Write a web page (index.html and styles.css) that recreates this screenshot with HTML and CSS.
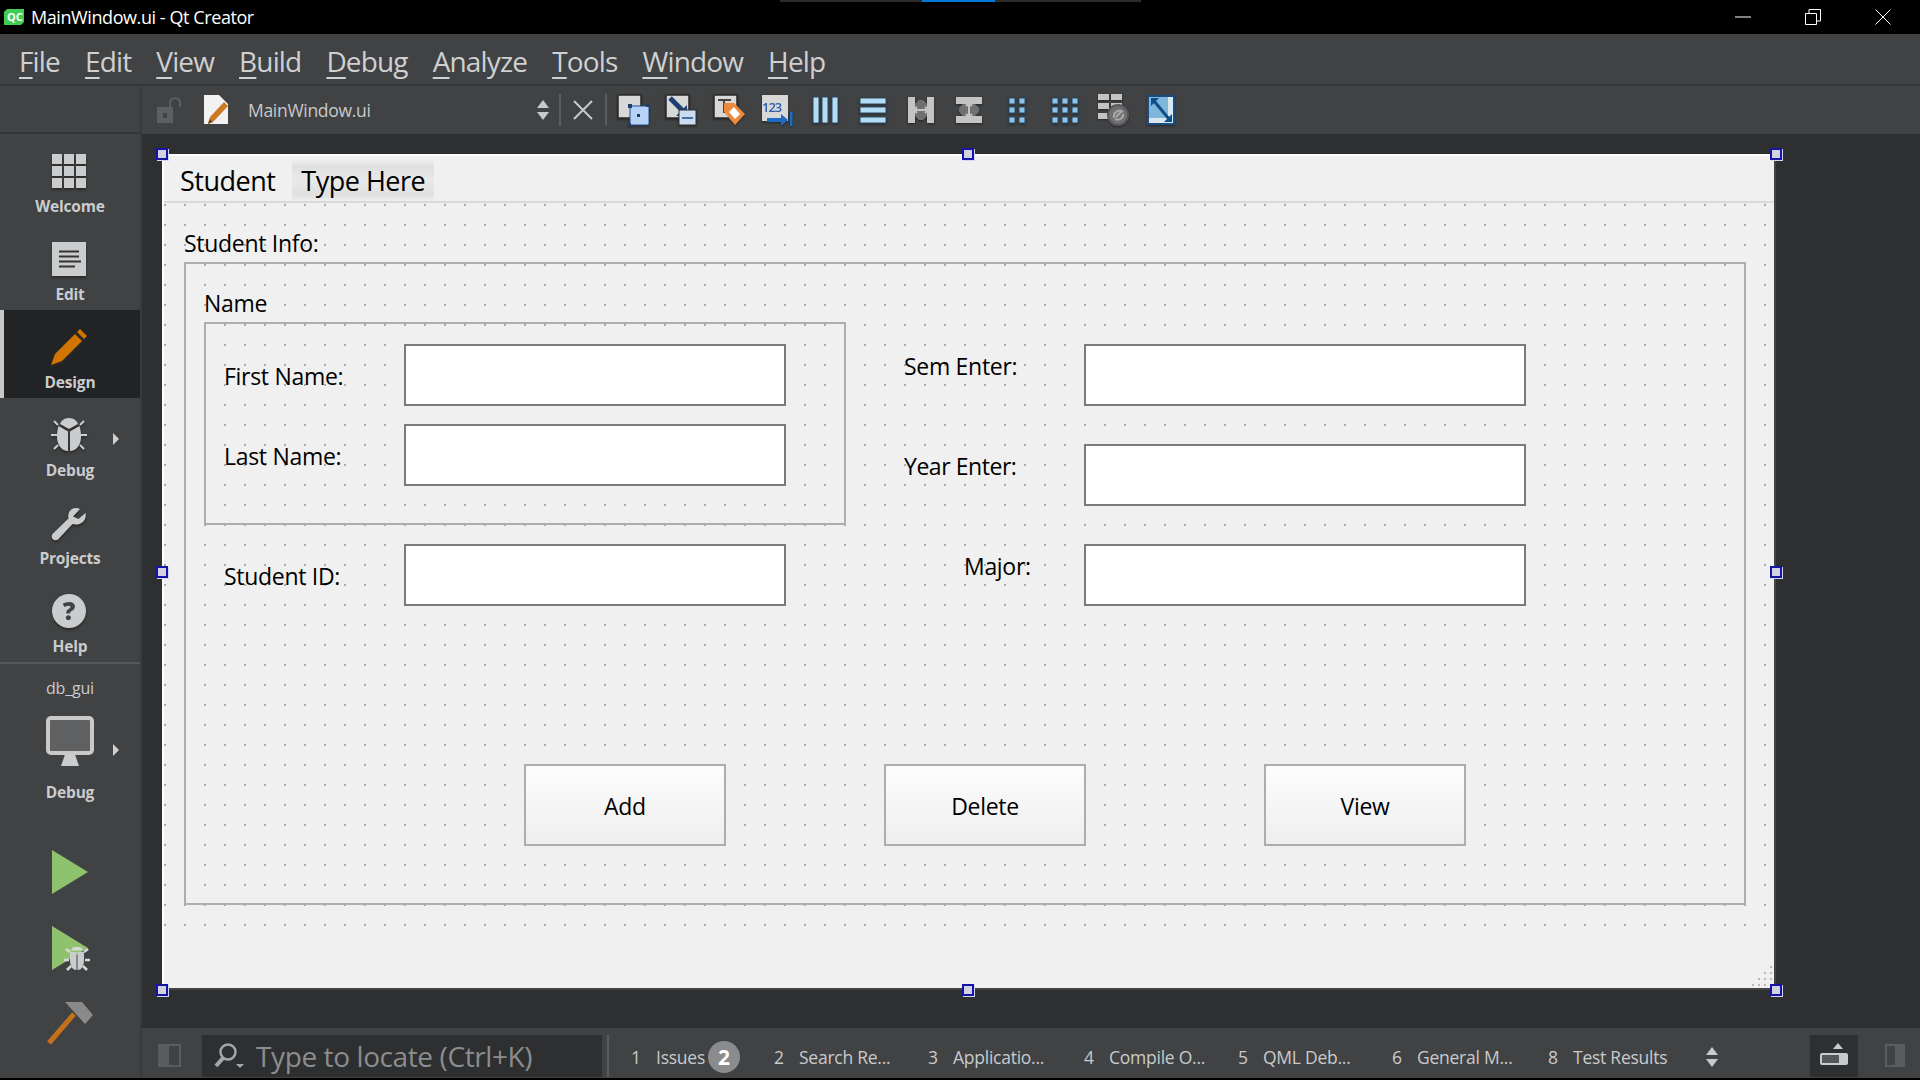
FILE: index.html
```html
<!DOCTYPE html>
<html lang="en">
<head>
    <meta charset="UTF-8">
    <title>MainWindow.ui - Qt Creator</title>
    <link rel="stylesheet" href="styles.css">
</head>
<body>

<header class="titlebar">
    <svg class="app-logo" width="20" height="16" viewBox="0 0 20 16"><path class="logo-bg" d="M3 0H20V13L17 16H0V3Z"/><text x="3" y="12" class="logo-text">QC</text></svg>
    <span class="title-text">MainWindow.ui - Qt Creator</span>
    <div class="task-strip"><span class="task-active"></span></div>
    <div class="window-btns">
        <svg width="16" height="16" viewBox="0 0 16 16"><path d="M0 8H16" /></svg>
        <svg width="16" height="16" viewBox="0 0 16 16"><path d="M.5 4.5H11.5V15.5H.5ZM4 4V.5H15.5V12H12" /></svg>
        <svg width="16" height="16" viewBox="0 0 16 16"><path d="M.5.5L15.5 15.5M15.5.5L.5 15.5" /></svg>
    </div>
</header>

<nav class="menubar">
    <span><u>F</u>ile</span>
    <span><u>E</u>dit</span>
    <span><u>V</u>iew</span>
    <span><u>B</u>uild</span>
    <span><u>D</u>ebug</span>
    <span><u>A</u>nalyze</span>
    <span><u>T</u>ools</span>
    <span><u>W</u>indow</span>
    <span><u>H</u>elp</span>
</nav>

<div class="workspace">
    <aside class="sidebar">
        <div class="side-top"></div>

        <div class="mode">
            <div class="mode-icon">
                <svg width="36" height="36" viewBox="0 0 36 36" class="nudge"><g class="ic"><rect x="1" y="1" width="10" height="10"/><rect x="13" y="1" width="10" height="10"/><rect x="25" y="1" width="10" height="10"/><rect x="1" y="13" width="10" height="10"/><rect x="13" y="13" width="10" height="10"/><rect x="25" y="13" width="10" height="10"/><rect x="1" y="25" width="10" height="10"/><rect x="13" y="25" width="10" height="10"/><rect x="25" y="25" width="10" height="10"/></g></svg>
            </div>
            <span class="mode-label">Welcome</span>
        </div>

        <div class="mode">
            <div class="mode-icon">
                <svg width="34" height="34" viewBox="0 0 34 34" class="nudge"><rect class="ic" width="34" height="34"/><path class="ic-lines" d="M7 9.5H27M7 14.5H27M7 19.5H29M7 24.5H23"/></svg>
            </div>
            <span class="mode-label">Edit</span>
        </div>

        <div class="mode mode-active">
            <div class="mode-icon">
                <svg width="36" height="36" viewBox="0 0 36 36" class="nudge"><path class="pencil" d="M0 36L4 25L24 5L31 12L11 32Z"/><path class="pencil" d="M26 3L29 0L36 7L33 10Z"/></svg>
            </div>
            <span class="mode-label">Design</span>
        </div>

        <div class="mode">
            <div class="mode-icon">
                <svg width="36" height="36" viewBox="0 0 36 36" class="nudge"><g class="ic"><path d="M18 1C13 1 10 4 9 7L18 12L27 7C26 4 23 1 18 1Z"/><path d="M7.500 9L17 14.500V34C11 34 6 28 6 20C6 16 6.500 12 7.500 9Z"/><path d="M28.500 9L19 14.500V34C25 34 30 28 30 20C30 16 29.500 12 28.500 9Z"/></g><path class="ic-leg" d="M7 8L3 4M29 8L33 4M6 18H0M30 18H36M7 28L3 32M29 28L33 32"/></svg>
            </div>
            <span class="mode-label">Debug</span>
            <span class="mode-arrow"></span>
        </div>

        <div class="mode">
            <div class="mode-icon">
                <svg width="36" height="36" viewBox="0 0 36 36" class="nudge"><path class="ic" d="M34.500 8L27.500 14L22 11.500L29 4C23 1 16 5 17.500 13.500L1.500 29C-1 33 3 37 7 34.500L21.500 19C29 21 36 16 34.500 8Z"/></svg>
            </div>
            <span class="mode-label">Projects</span>
        </div>

        <div class="mode">
            <div class="mode-icon">
                <svg width="36" height="36" viewBox="0 0 36 36" class="nudge"><circle class="ic" cx="18" cy="18" r="17"/><text class="help-q" x="18" y="27">?</text></svg>
            </div>
            <span class="mode-label">Help</span>
        </div>

        <div class="kit">
            <span class="kit-name">db_gui</span>
            <div class="kit-icon">
                <svg width="48" height="50" viewBox="0 0 48 50"><rect class="monitor" x="2" y="2" width="44" height="35" rx="3"/><path class="ic" d="M15 50L19.500 37H28.500L33 50Z"/></svg>
            </div>
            <span class="mode-label">Debug</span>
            <span class="mode-arrow kit-arrow"></span>
        </div>

        <div class="run-btn">
            <svg width="44" height="46" viewBox="0 0 44 46"><path class="run" d="M4 1L40 23L4 45Z"/></svg>
        </div>
        <div class="run-btn">
            <svg width="44" height="46" viewBox="0 0 44 46"><path class="run" d="M4 1L40 23L4 45Z"/><g class="ic"><path d="M27 22C24.500 22 23.500 24 23 25.500H35C34.500 24 33.500 22 31 22Z" class="bug-head"/><path d="M22 27H28.500V45C24 45 22 40 22 35Z"/><path d="M36 27H29.500V45C34 45 36 40 36 35Z"/></g><path class="ic-leg thin" d="M22 27L18 24M36 27L40 24M21 35H16M37 35H42M23 41L19 45M35 41L39 45"/></svg>
        </div>
        <div class="run-btn">
            <svg width="48" height="44" viewBox="0 0 48 44"><path class="hammer-handle" d="M3 41L28 12"/><path class="hammer-head" d="M19 0H36L47 13L39 22Z"/></svg>
        </div>
    </aside>

    <main class="main">
        <div class="toolbar">
            <svg class="lock" width="26" height="26" viewBox="0 0 26 26"><rect class="lock-body" x="0" y="10" width="16" height="16"/><rect class="lock-hole" x="6" y="16" width="4" height="5"/><path class="lock-shackle" d="M13 10V6C13 2 15 1 18 1C21 1 23 2 23 6V10"/></svg>
            <svg class="file-icon" width="28" height="30" viewBox="0 0 28 30"><path class="file-page" d="M1 0H16L25 9V29H1Z"/><path class="file-pencil" d="M5 29L7 22L21 7L25 11L11 26Z"/><path class="file-tip" d="M5 29L6.500 24L10 27Z"/></svg>
            <span class="doc-name">MainWindow.ui</span>
            <svg class="updown" width="12" height="20" viewBox="0 0 12 20"><path d="M6 0L12 8H0ZM0 12H12L6 20Z"/></svg>
            <span class="tool-sep"></span>
            <svg class="close-doc" width="20" height="20" viewBox="0 0 20 20"><path d="M1 1L19 19M19 1L1 19"/></svg>
            <span class="tool-sep"></span>

            <div class="tool-icons">
                <span class="tool"><svg width="32" height="32" viewBox="0 0 32 32"><rect class="tile" x="1" y="1" width="23" height="23"/><rect class="blue" x="13" y="12" width="19" height="19" rx="1"/><rect class="dark" x="20" y="20" width="3" height="3"/><rect class="navy" x="11" y="10" width="4" height="4"/><rect class="navy" x="11" y="29" width="3" height="3"/><rect class="navy" x="29" y="10" width="3" height="3"/></svg></span>
                <span class="tool"><svg width="32" height="32" viewBox="0 0 32 32"><rect class="tile" x="1" y="1" width="23" height="23"/><path class="arrow-navy" d="M5 4L19 18"/><path class="navy" d="M22 22V11L11 22Z"/><rect class="blue-lite" x="14" y="16" width="17" height="15"/><rect class="steel" x="17" y="23" width="11" height="2"/></svg></span>
                <span class="tool"><svg width="32" height="32" viewBox="0 0 32 32"><rect class="tile" x="1" y="1" width="23" height="23"/><path class="t-mark" d="M5 6H18M11 6V19"/><path class="orange" d="M11 9H21L32 20L22 31L11 18Z"/><path class="white" d="M16 18L21 13L27 20L22 25Z"/></svg></span>
                <span class="tool"><svg width="32" height="32" viewBox="0 0 32 32"><rect class="tile tile-plain" x="1" y="1" width="26" height="26"/><text class="tab-nums" x="1" y="18">123</text><path class="arrow-blue" d="M6 26H24"/><path class="navy-bright" d="M20 20L27 26L20 32Z"/><rect class="navy-bright" x="29" y="18" width="2.500" height="14"/></svg></span>
                <span class="tool"><svg width="32" height="32" viewBox="0 0 32 32"><rect class="bar" x="4" y="3" width="6" height="26"/><rect class="bar" x="13" y="3" width="6" height="26"/><rect class="bar" x="23" y="3" width="6" height="26"/></svg></span>
                <span class="tool"><svg width="32" height="32" viewBox="0 0 32 32"><rect class="bar" x="3" y="4" width="26" height="6"/><rect class="bar" x="3" y="13" width="26" height="6"/><rect class="bar" x="3" y="23" width="26" height="6"/></svg></span>
                <span class="tool"><svg width="32" height="32" viewBox="0 0 32 32"><rect class="gray" x="3" y="3" width="7" height="26"/><rect class="gray" x="22" y="3" width="7" height="26"/><path class="gray-dim" d="M10 10L14 6H18L22 10V22L18 26H14L10 22Z"/><path class="split" d="M9 16H23M12 13L9 16L12 19M20 13L23 16L20 19"/></svg></span>
                <span class="tool"><svg width="32" height="32" viewBox="0 0 32 32"><rect class="gray" x="3" y="3" width="26" height="7"/><rect class="gray" x="3" y="22" width="26" height="7"/><path class="gray-dim" d="M10 10L6 14V18L10 22H22L26 18V14L22 10Z"/><path class="split" d="M16 9V23M13 12L16 9L19 12M13 20L16 23L19 20"/></svg></span>
                <span class="tool"><svg width="32" height="32" viewBox="0 0 32 32"><g class="cells"><rect x="8" y="4" width="6" height="6"/><rect x="18" y="4" width="6" height="6"/><rect x="8" y="13" width="6" height="6"/><rect x="18" y="13" width="6" height="6"/><rect x="8" y="23" width="6" height="6"/><rect x="18" y="23" width="6" height="6"/></g></svg></span>
                <span class="tool"><svg width="32" height="32" viewBox="0 0 32 32"><g class="cells"><rect x="3" y="4" width="6" height="6"/><rect x="13" y="4" width="6" height="6"/><rect x="23" y="4" width="6" height="6"/><rect x="3" y="13" width="6" height="6"/><rect x="13" y="13" width="6" height="6"/><rect x="23" y="13" width="6" height="6"/><rect x="3" y="23" width="6" height="6"/><rect x="13" y="23" width="6" height="6"/><rect x="23" y="23" width="6" height="6"/></g></svg></span>
                <span class="tool"><svg width="34" height="34" viewBox="0 0 34 34"><g class="gray"><rect x="2" y="1" width="11" height="6"/><rect x="15" y="1" width="11" height="6"/><rect x="2" y="10" width="11" height="6"/><rect x="15" y="10" width="11" height="6"/><rect x="2" y="20" width="11" height="6"/></g><circle class="break-ring" cx="22" cy="22" r="10"/><path class="break-mark" d="M18 25C17 19 23 16 27 19M19 26C23 28 28 25 27 21M20 24L25 19"/></svg></span>
                <span class="tool"><svg width="30" height="32" viewBox="0 0 30 32"><rect class="adjust-frame" x="1" y="1" width="28" height="30"/><rect class="adjust-lite" x="22" y="3" width="5" height="21"/><rect class="adjust-lite" x="3" y="24" width="24" height="5"/><rect class="adjust-mid" x="3" y="3" width="19" height="21"/><path class="adjust-arrow" d="M8 7L23 25"/><path class="adjust-tip" d="M5 4H13L5 12ZM26 28H18L26 20Z"/></svg></span>
            </div>
        </div>

        <div class="canvas">
            <div class="form">
                <div class="form-menu">
                    <span class="form-menu-item">Student</span>
                    <span class="form-menu-item form-menu-new">Type Here</span>
                </div>
                <div class="central">
                    <span class="lbl lbl-info">Student Info:</span>
                    <div class="frame frame-info"></div>
                    <span class="lbl lbl-name">Name</span>
                    <div class="frame frame-name"></div>

                    <span class="lbl lbl-first">First Name:</span>
                    <input class="edit edit-first" type="text">
                    <span class="lbl lbl-last">Last Name:</span>
                    <input class="edit edit-last" type="text">
                    <span class="lbl lbl-id">Student ID:</span>
                    <input class="edit edit-id" type="text">

                    <span class="lbl lbl-sem">Sem Enter:</span>
                    <input class="edit edit-sem" type="text">
                    <span class="lbl lbl-year">Year Enter:</span>
                    <input class="edit edit-year" type="text">
                    <span class="lbl lbl-major">Major:</span>
                    <input class="edit edit-major" type="text">

                    <button class="push push-add">Add</button>
                    <button class="push push-delete">Delete</button>
                    <button class="push push-view">View</button>
                </div>

                <svg class="grip" width="20" height="20" viewBox="0 0 20 20"><path d="M18 0h2v2h-2zM12 6h2v2h-2zM18 6h2v2h-2zM6 12h2v2H6zM12 12h2v2h-2zM18 12h2v2h-2zM0 18h2v2H0zM6 18h2v2H6zM12 18h2v2h-2zM18 18h2v2h-2z"/></svg>

                <span class="handle h-tl"></span>
                <span class="handle h-tc"></span>
                <span class="handle h-tr"></span>
                <span class="handle h-ml"></span>
                <span class="handle h-mr"></span>
                <span class="handle h-bl"></span>
                <span class="handle h-bc"></span>
                <span class="handle h-br"></span>
            </div>
        </div>

        <div class="outputbar">
            <svg class="pane-toggle" width="23" height="23" viewBox="0 0 23 23"><rect class="pane-fill" width="11" height="23"/><rect class="pane-line" x="1" y="1" width="21" height="21"/></svg>
            <div class="locator">
                <svg width="30" height="26" viewBox="0 0 30 26"><circle class="loc-ring" cx="14" cy="9" r="7.500"/><path class="loc-handle" d="M9 15L2 23"/><path class="loc-drop" d="M22 21H30L26 25Z"/></svg>
                <span class="locator-text">Type to locate (Ctrl+K)</span>
            </div>
            <span class="bar-sep"></span>
            <div class="tabs">
                <span class="tab tab-issues"><b>1</b>Issues<i class="badge">2</i></span>
                <span class="tab"><b>2</b>Search Re...</span>
                <span class="tab tab-wide"><b>3</b>Applicatio...</span>
                <span class="tab"><b>4</b>Compile O...</span>
                <span class="tab"><b>5</b>QML Deb...</span>
                <span class="tab tab-wide"><b>6</b>General M...</span>
                <span class="tab"><b>8</b>Test Results</span>
            </div>
            <svg class="updown tab-updown" width="12" height="20" viewBox="0 0 12 20"><path d="M6 0L12 8H0ZM0 12H12L6 20Z"/></svg>
            <div class="panel-toggle">
                <svg width="30" height="26" viewBox="0 0 30 26"><path class="panel-up" d="M19 0L24 6H14Z"/><rect class="panel-body" x="1" y="10" width="28" height="12" rx="2"/><rect class="panel-fill" x="3" y="12" width="17" height="8"/></svg>
            </div>
            <svg class="side-toggle" width="20" height="23" viewBox="0 0 20 23"><rect class="pane-line" x="1" y="1" width="18" height="21"/><rect class="pane-fill" x="10" width="10" height="23"/></svg>
        </div>
    </main>
</div>

</body>
</html>
```

FILE: styles.css
```css
html, body {
    margin: 0;
    padding: 0;
}
body {
    width: 1920px;
    height: 1080px;
    overflow: hidden;
    background-color: #000;
    font-family: "Open Sans", "Noto Sans", sans-serif;
}

/* title bar */
.titlebar {
    position: relative;
    display: flex;
    align-items: center;
    height: 34px;
    padding-left: 4px;
    color: #fff;
}
.logo-bg { fill: #41cd52; }
.logo-text { font-size: 11px; font-weight: 700; fill: #fff; }
.title-text {
    margin-left: 7px;
    font-size: 18px;
    letter-spacing: -0.42px;
}
.task-strip {
    position: absolute;
    left: 780px;
    top: 0;
    width: 361px;
    height: 2px;
    background-color: #2b2b2b;
}
.task-active {
    display: block;
    width: 73px;
    height: 2px;
    margin-left: 142px;
    background-color: #0078d7;
}
.window-btns {
    display: flex;
    gap: 54px;
    margin-left: auto;
    padding-right: 29px;
}
.window-btns svg { fill: none; stroke: #fff; stroke-width: 1; }

/* menu bar */
.menubar {
    display: flex;
    align-items: center;
    gap: 25px;
    box-sizing: border-box;
    height: 52px;
    padding-left: 19px;
    padding-top: 4px;
    background-color: #404244;
    border-bottom: 2px solid #353637;
    color: #cfd0d1;
    font-size: 28px;
    letter-spacing: -0.85px;
}
.menubar u {
    text-underline-offset: 5px;
    text-decoration-thickness: 2px;
}

.workspace {
    display: flex;
    height: 992px;
}

/* left mode bar */
.sidebar {
    flex: 0 0 140px;
    background-color: #404244;
    border-right: 2px solid #393a3c;
    color: #cbcccd;
}
.side-top {
    height: 46px;
    border-bottom: 2px solid #333435;
}
.mode {
    position: relative;
    display: flex;
    flex-direction: column;
    align-items: center;
    box-sizing: border-box;
    height: 88px;
    padding-top: 11px;
}
.mode-active {
    background-color: #222324;
    border-left: 4px solid #c8c8c8;
    padding-right: 4px;
}
.mode-icon {
    display: flex;
    align-items: center;
    justify-content: center;
    height: 51px;
}
.nudge { margin-left: -3px; filter: drop-shadow(0 2px 1px #2a2a2a); }
.mode-label {
    font-size: 15.5px;
    font-weight: 700;
    line-height: 20px;
    letter-spacing: -0.2px;
}
.mode-arrow {
    position: absolute;
    left: 113px;
    top: 35px;
    border-left: 6px solid #d0d0d0;
    border-top: 6px solid transparent;
    border-bottom: 6px solid transparent;
}
.kit-arrow { top: 80px; }
.ic { fill: #cbcccd; }
.ic-lines { stroke: #333; stroke-width: 2; fill: none; }
.ic-leg { stroke: #cbcccd; stroke-width: 2; fill: none; }
.ic-leg.thin { stroke: #d8d8d8; stroke-width: 2.500; }
.pencil { fill: #d27400; }
.help-q { font-size: 25px; font-weight: 800; fill: #404244; text-anchor: middle; }

.kit {
    position: relative;
    display: flex;
    flex-direction: column;
    align-items: center;
    height: 172px;
    border-top: 2px solid #55575a;
    box-sizing: border-box;
}
.kit-name {
    margin-top: 14px;
    font-size: 16px;
    line-height: 20px;
    letter-spacing: -0.2px;
}
.kit-icon {
    height: 50px;
    margin-top: 18px;
    margin-bottom: 16px;
    margin-left: -1px;
}
.monitor { fill: #5f6061; stroke: #c9c9c9; stroke-width: 4; }
.run-btn {
    display: flex;
    justify-content: center;
    align-items: center;
    height: 76px;
}
.run { fill: #8fc26d; }
.bug-head { fill: #d8d8d8; }
.hammer-handle { stroke: #c5701b; stroke-width: 5; fill: none; }
.hammer-head { fill: #8a8a8a; }

/* right side */
.main {
    flex: 1;
    display: flex;
    flex-direction: column;
    min-width: 0;
}
.toolbar {
    display: flex;
    align-items: center;
    flex: 0 0 48px;
    padding-left: 15px;
    background-color: #404244;
    color: #c8c9ca;
}
.lock-body { fill: #5d5e60; }
.lock-hole { fill: #404244; }
.lock-shackle { fill: none; stroke: #5d5e60; stroke-width: 2; }
.file-icon { margin-left: 20px; }
.file-page { fill: #f2f2f2; }
.file-pencil { fill: #cb7a24; }
.file-tip { fill: #7a4a16; }
.doc-name {
    width: 289px;
    margin-left: 17px;
    font-size: 17.5px;
    letter-spacing: -0.3px;
}
.updown { fill: #c8c9ca; }
.tool-sep {
    width: 2px;
    height: 32px;
    margin-left: 10px;
    background-color: #5a5c5e;
}
.close-doc {
    margin-left: 12px;
    margin-right: 2px;
    fill: none;
    stroke: #c8c9ca;
    stroke-width: 2;
}
.tool-icons {
    display: flex;
    margin-left: 2px;
}
.tool {
    display: flex;
    justify-content: center;
    align-items: center;
    width: 48px;
    height: 48px;
}
.tool svg { filter: drop-shadow(0 1px 1px #262626); }
.tile { fill: #d8d8d8; stroke: #2a2a2a; stroke-width: 1.500; }
.tile-plain { stroke: none; }
.blue { fill: #b6d2f7; stroke: #21508f; stroke-width: 1; }
.blue-lite { fill: #c9dcf2; stroke: #333; stroke-width: 1; }
.dark { fill: #1f3b63; }
.navy { fill: #1f3f70; }
.navy-bright { fill: #1c6bc4; }
.steel { fill: #4b6f9c; }
.arrow-navy { stroke: #1f3f70; stroke-width: 5; fill: none; }
.t-mark { stroke: #444; stroke-width: 2; fill: none; }
.orange { fill: #ec8a3c; }
.white { fill: #fff; }
.tab-nums { font-size: 13px; font-weight: 600; letter-spacing: -1px; fill: #2a62ac; }
.arrow-blue { stroke: #1c6bc4; stroke-width: 4; fill: none; }
.bar { fill: #b3dcf7; stroke: #2e4a5f; stroke-width: 1; }
.gray { fill: #c4c4c4; }
.gray-dim { fill: #6f7072; }
.split { stroke: #c4c4c4; stroke-width: 2; fill: none; }
.cells rect { fill: #8cc4ee; stroke: #2e4a5f; stroke-width: 1; }
.break-ring { fill: #6f7072; stroke: #59595b; stroke-width: 2; }
.break-mark { stroke: #a9a9a9; stroke-width: 2; fill: none; }
.adjust-frame { fill: #1d4d80; }
.adjust-lite { fill: #d9e7ef; }
.adjust-mid { fill: #7fb6dc; }
.adjust-arrow { stroke: #0e4f86; stroke-width: 3; fill: none; }
.adjust-tip { fill: #0e4f86; }

/* designer canvas */
.canvas {
    flex: 1;
    padding: 20px 0 0 20px;
    background-color: #2e2f30;
}
.form {
    position: relative;
    box-sizing: border-box;
    width: 1614px;
    height: 836px;
    background-color: #f0f0f0;
    border-style: solid;
    border-width: 2px;
    border-color: #fff #424345 #424345 #fff;
}
.form-menu {
    display: flex;
    height: 45px;
    padding-left: 7px;
    border-bottom: 2px solid #d9d9d9;
    color: #000;
    font-size: 27px;
    letter-spacing: -0.5px;
}
.form-menu-item {
    display: flex;
    align-items: center;
    margin-top: 4px;
    padding: 0 9px;
}
.form-menu-new {
    margin-left: 8px;
    background: linear-gradient(#efefef, #e0e0e0 15%, #e9e9e9 50%, #e0e0e0 85%, #eeeeee);
}
.central {
    position: relative;
    height: 727px;
    background-image: conic-gradient(at 2px 2px, transparent 75%, #ababab 0);
    background-size: 20px 20px;
    background-position: 0 1px;
    color: #000;
    font-size: 23px;
}

/* widgets sit at their designer coordinates */
.lbl {
    position: absolute;
    line-height: 30px;
    letter-spacing: -0.3px;
    white-space: nowrap;
}
.lbl-info { left: 20px; top: 25px; }
.lbl-name { left: 40px; top: 85px; }
.lbl-first { left: 60px; top: 158px; }
.lbl-last { left: 60px; top: 238px; }
.lbl-id { left: 60px; top: 358px; }
.lbl-sem { left: 740px; top: 148px; }
.lbl-year { left: 740px; top: 248px; letter-spacing: -0.45px; }
.lbl-major { left: 800px; top: 348px; }

.frame {
    position: absolute;
    box-sizing: border-box;
    border: 2px solid #adadad;
}
.frame-info { left: 20px; top: 59px; width: 1562px; height: 643px; }
.frame-name { left: 40px; top: 119px; width: 642px; height: 203px; }

.edit {
    position: absolute;
    box-sizing: border-box;
    height: 62px;
    margin: 0;
    padding: 0;
    background-color: #fff;
    border: 2px solid #7a7a7a;
    border-radius: 0;
    outline: none;
}
.edit-first, .edit-last, .edit-id { left: 240px; width: 382px; }
.edit-first { top: 141px; }
.edit-last { top: 221px; }
.edit-id { top: 341px; }
.edit-sem, .edit-year, .edit-major { left: 920px; width: 442px; }
.edit-sem { top: 141px; }
.edit-year { top: 241px; }
.edit-major { top: 341px; }

.push {
    position: absolute;
    top: 561px;
    box-sizing: border-box;
    width: 202px;
    height: 82px;
    margin: 0;
    padding: 2px 0 0;
    background: linear-gradient(#fdfdfd, #eeeeee);
    border: 2px solid #adadad;
    border-radius: 3px;
    color: #000;
    font-family: inherit;
    font-size: 23px;
    letter-spacing: -0.3px;
}
.push-add { left: 360px; }
.push-delete { left: 720px; }
.push-view { left: 1100px; }

.grip {
    position: absolute;
    right: 2px;
    bottom: 2px;
    fill: #b8b8b8;
}

/* selection handles */
.handle {
    position: absolute;
    box-sizing: border-box;
    width: 12px;
    height: 12px;
    background-color: #d2d2e0;
    border: 2px solid #1515a5;
    box-shadow: 1px 1px 0 #d5d5f2;
}
.h-tl { left: -8px; top: -8px; }
.h-tc { left: 798px; top: -8px; }
.h-tr { left: 1606px; top: -8px; }
.h-ml { left: -8px; top: 410px; }
.h-mr { left: 1606px; top: 410px; }
.h-bl { left: -8px; top: 828px; }
.h-bc { left: 798px; top: 828px; }
.h-br { left: 1606px; top: 828px; }

/* bottom output bar */
.outputbar {
    display: flex;
    align-items: center;
    box-sizing: border-box;
    flex: 0 0 50px;
    padding-top: 5px;
    background-color: #404244;
    color: #c9cacb;
    font-size: 17.5px;
}
.pane-toggle { margin-left: 16px; }
.pane-fill { fill: #5a5c5e; }
.pane-line { fill: none; stroke: #5a5c5e; stroke-width: 2; }
.locator {
    display: flex;
    align-items: center;
    box-sizing: border-box;
    width: 400px;
    height: 42px;
    margin-left: 21px;
    padding-left: 12px;
    background-color: #2e2f30;
    color: #8c8d8e;
    font-size: 28px;
    letter-spacing: -0.4px;
}
.locator-text { margin-left: 12px; }
.loc-ring { fill: none; stroke: #a5a6a7; stroke-width: 2.500; }
.loc-handle { stroke: #a5a6a7; stroke-width: 4; fill: none; }
.loc-drop { fill: #a5a6a7; }
.bar-sep {
    width: 2px;
    height: 42px;
    margin-left: 5px;
    background-color: #5a5c5e;
}
.tabs {
    display: flex;
    margin-left: 22px;
    margin-top: 3px;
    letter-spacing: -0.25px;
}
.tab {
    display: flex;
    align-items: center;
    width: 154px;
    white-space: nowrap;
}
.tab b {
    width: 25px;
    font-weight: 400;
}
.tab-issues { width: 143px; }
.tab-wide { width: 156px; }
.badge {
    width: 32px;
    height: 32px;
    margin-left: 3px;
    border-radius: 50%;
    background-color: #8a8b8c;
    color: #fff;
    font-style: normal;
    font-weight: 700;
    font-size: 21px;
    line-height: 32px;
    text-align: center;
}
.tab-updown { margin-left: 4px; margin-top: 3px; }
.panel-toggle {
    display: flex;
    align-items: center;
    justify-content: center;
    width: 48px;
    height: 42px;
    margin-left: 92px;
    background-color: #2e2f30;
}
.panel-up { fill: #c9cacb; }
.panel-body { fill: #c9cacb; }
.panel-fill { fill: #55575a; }
.side-toggle { margin-left: 27px; }
```
